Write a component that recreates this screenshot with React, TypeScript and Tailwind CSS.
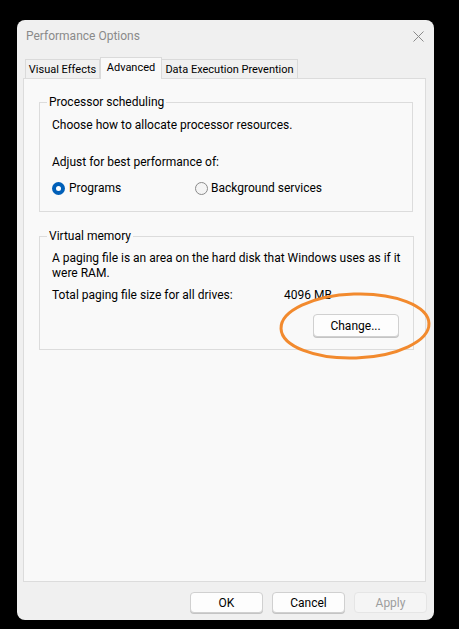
import React from "react";

const font = { fontFamily: 'Roboto, "Noto Sans", sans-serif' };

function Btn({ children, disabled, className = "" }: { children: React.ReactNode; disabled?: boolean; className?: string }) {
  return (
    <div
      className={
        "flex items-center justify-center rounded-[4px] border text-[12px] " +
        (disabled
          ? "border-[#e5e5e5] bg-[#f5f5f5] text-[#9d9d9d]"
          : "border-[#d0d0d0] bg-[#fdfdfd] text-black shadow-[0_1px_0_#c4c4c4]") +
        " " +
        className
      }
    >
      {children}
    </div>
  );
}

export default function App() {
  return (
    <div className="w-[459px] h-[629px] bg-black pt-[20px] pl-[17px]" style={font}>
      <div className="relative w-[417px] h-[600px] rounded-[8px] bg-[#f0f0f0] flex flex-col">
        {/* title bar */}
        <div className="h-[30px] flex items-center justify-between pl-[9px] pr-[10px]">
          <span className="text-[12px] text-[#8a8a8a] leading-none mt-[2px]">Performance Options</span>
          <svg width="11" height="11" viewBox="0 0 11 11" className="mt-[2px]">
            <path d="M0.5 0.5 L10.5 10.5 M10.5 0.5 L0.5 10.5" stroke="#8a8a8a" strokeWidth="1" />
          </svg>
        </div>
        {/* tabs */}
        <div className="mt-[7px] h-[21px] flex items-end pl-[8px] text-[11px] text-black whitespace-nowrap">
          <div className="shrink-0 w-[75px] h-[19px] flex items-center justify-center border border-b-0 border-[#dadada] bg-[#f0f0f0] leading-none">
            Visual Effects
          </div>
          <div className="shrink-0 relative z-10 w-[62px] h-[22px] -mb-px flex items-start justify-center pt-[4px] border border-b-0 border-[#dadada] bg-[#f9f9f9] leading-none">
            Advanced
          </div>
          <div className="shrink-0 w-[136px] h-[19px] flex items-center justify-center border border-b-0 border-l-0 border-[#dadada] bg-[#f0f0f0] leading-none">
            Data Execution Prevention
          </div>
        </div>
        {/* panel */}
        <div className="ml-[6px] w-[403px] h-[504px] border border-[#dcdcdc] bg-[#f9f9f9] px-[15px] pt-[15px] text-[12px] text-black">
          <fieldset className="w-[374px] h-[118px] border border-[#dcdcdc] px-[12px] pb-[15px]">
            <legend className="-ml-[5px] px-[2px] leading-[16px]">Processor scheduling</legend>
            <div className="mt-[7px] leading-[16px]">Choose how to allocate processor resources.</div>
            <div className="mt-[21px] leading-[16px]">Adjust for best performance of:</div>
            <div className="mt-[10px] grid grid-cols-[143px_1fr] leading-[16px]">
              <div className="flex items-center gap-[4px]">
                <span className="w-[13px] h-[13px] rounded-full bg-[#005fb8] flex items-center justify-center">
                  <span className="w-[5px] h-[5px] rounded-full bg-white" />
                </span>
                <span>Programs</span>
              </div>
              <div className="flex items-center gap-[3px]">
                <span className="w-[13px] h-[13px] rounded-full border border-[#8a8a8a] bg-[#f4f4f4]" />
                <span>Background services</span>
              </div>
            </div>
          </fieldset>
          <fieldset className="mt-[16px] w-[374px] h-[122px] border border-[#dcdcdc] px-[12px] pb-[12px]">
            <legend className="-ml-[5px] px-[2px] leading-[16px]">Virtual memory</legend>
            <div className="mt-[7px] leading-[15px] whitespace-nowrap">
              A paging file is an area on the hard disk that Windows uses as if it
              <br />
              were RAM.
            </div>
            <div className="mt-[6px] grid grid-cols-[232px_1fr] leading-[16px]">
              <span>Total paging file size for all drives:</span>
              <span>4096 MB</span>
            </div>
            <div className="mt-[11px] flex justify-end pr-[2px]">
              <Btn className="w-[86px] h-[23px]">Change...</Btn>
            </div>
          </fieldset>
        </div>
        {/* bottom buttons */}
        <div className="mt-[10px] flex justify-end gap-[9px] pr-[7px]">
          <Btn className="w-[73px] h-[21px]">OK</Btn>
          <Btn className="w-[73px] h-[21px]">Cancel</Btn>
          <Btn disabled className="w-[73px] h-[21px]">Apply</Btn>
        </div>
        {/* orange annotation */}
        <svg
          className="absolute left-[260px] top-[270px] pointer-events-none"
          width="160"
          height="75"
          viewBox="0 0 160 75"
        >
          <ellipse cx="78" cy="36" rx="74" ry="32" fill="none" stroke="#f28a2e" strokeWidth="3" transform="rotate(-2 78 36)" />
        </svg>
      </div>
    </div>
  );
}
